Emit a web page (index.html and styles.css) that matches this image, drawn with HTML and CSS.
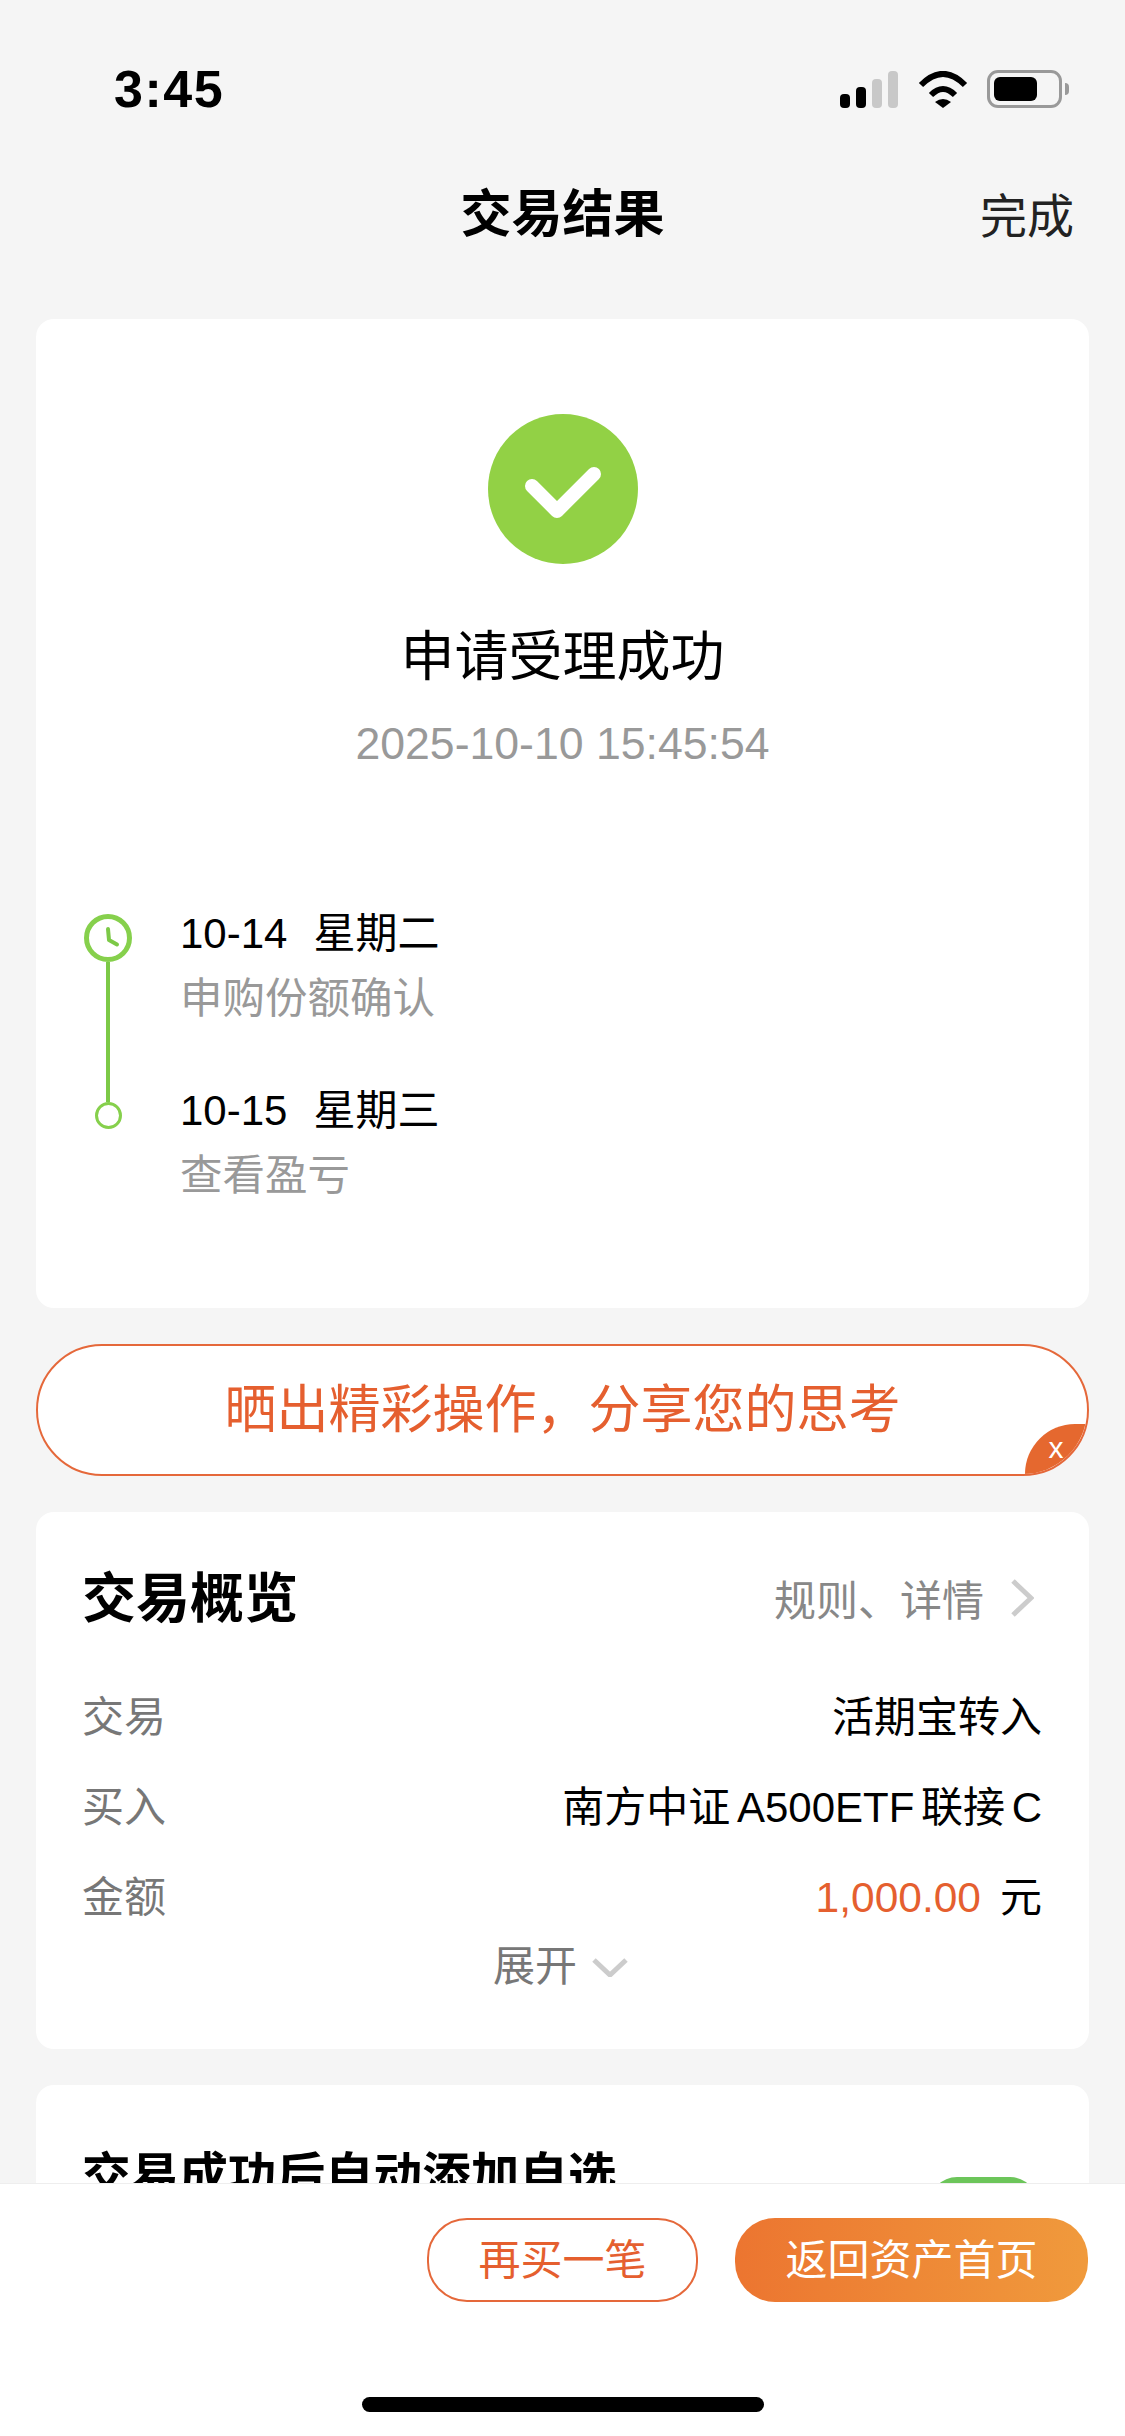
FILE: index.html
```html
<!DOCTYPE html>
<html>
<head>
<meta name="viewport" content="width=device-width, initial-scale=1">
<link rel="stylesheet" href="styles.css">
</head>
<body>

<div class="page">
    <!-- status bar -->
    <div class="status">
        <span class="time">3:45</span>
        <div class="status-icons">
            <div class="signal">
                <i class="bar bar1"></i>
                <i class="bar bar2"></i>
                <i class="bar bar3"></i>
                <i class="bar bar4"></i>
            </div>
            <svg class="wifi" viewBox="0 0 50 37">
                <path d="M3 14Q25 -8 47 14" fill="none" stroke="#000" stroke-width="6"/>
                <path d="M13 24Q25 12 37 24" fill="none" stroke="#000" stroke-width="6"/>
                <path d="M17 31Q25 25 33 31L25 37Z" fill="#000"/>
            </svg>
            <div class="battery"><i class="battery-fill"></i></div>
            <i class="battery-cap"></i>
        </div>
    </div>

    <div class="nav">
        <h1 class="nav-title">交易结果</h1>
        <a class="nav-done">完成</a>
    </div>

    <div class="content">
        <div class="card result">
            <svg class="success-icon" viewBox="0 0 150 150">
                <circle cx="75" cy="75" r="75" fill="#92d145"/>
                <path d="M44 72L69 97L106 60" fill="none" stroke="#fff" stroke-width="14" stroke-linecap="round" stroke-linejoin="round"/>
            </svg>
            <div class="result-title">申请受理成功</div>
            <div class="result-time">2025-10-10 15:45:54</div>

            <div class="timeline">
                <div class="rail">
                    <svg class="clock" viewBox="0 0 48 48">
                        <circle cx="24" cy="24" r="21.500" fill="none" stroke="#86d04c" stroke-width="5"/>
                        <path d="M24 15L25 26L33 30.500" fill="none" stroke="#7cc947" stroke-width="4" stroke-linecap="round" stroke-linejoin="round"/>
                    </svg>
                    <i class="rail-line"></i>
                    <i class="rail-dot"></i>
                </div>
                <div class="steps">
                    <div class="step">
                        <div class="step-date">10-14<span class="weekday">星期二</span></div>
                        <div class="step-text">申购份额确认</div>
                    </div>
                    <div class="step">
                        <div class="step-date">10-15<span class="weekday">星期三</span></div>
                        <div class="step-text">查看盈亏</div>
                    </div>
                </div>
            </div>
        </div>

        <div class="share">
            <span class="share-text">晒出精彩操作，分享您的思考</span>
            <span class="share-close">x</span>
        </div>

        <div class="card overview">
            <div class="overview-head">
                <h2 class="overview-title">交易概览</h2>
                <div class="overview-link">
                    规则、详情
                    <svg class="chevron-right" viewBox="0 0 24 38">
                        <path d="M3 2L21 19L3 36" fill="none" stroke="#ccc" stroke-width="5"/>
                    </svg>
                </div>
            </div>
            <div class="row">
                <span class="row-label">交易</span>
                <span class="row-value">活期宝转入</span>
            </div>
            <div class="row">
                <span class="row-label">买入</span>
                <span class="row-value">南方中证 A500ETF 联接 C</span>
            </div>
            <div class="row">
                <span class="row-label">金额</span>
                <span class="row-value"><span class="amount">1,000.00</span>元</span>
            </div>
            <div class="expand">
                展开
                <svg class="chevron-down" viewBox="0 0 36 20">
                    <path d="M2 3L18 18L34 3" fill="none" stroke="#ccc" stroke-width="5"/>
                </svg>
            </div>
        </div>

        <div class="card watch">
            <div class="watch-title">交易成功后自动添加自选</div>
            <div class="toggle"></div>
        </div>
    </div>

    <div class="footer">
        <div class="footer-btns">
            <a class="btn btn-line">再买一笔</a>
            <a class="btn btn-fill">返回资产首页</a>
        </div>
        <div class="home-bar"></div>
    </div>
</div>

</body>
</html>
```

FILE: styles.css
```css
* {
    box-sizing: border-box;
}

body {
    margin: 0;
    font-family: "Liberation Sans", "Noto Sans CJK SC", sans-serif;
    color: #000;
}

h1, h2 {
    margin: 0;
    font-weight: 700;
}

.page {
    position: relative;
    width: 1125px;
    height: 2436px;
    overflow: hidden;
    background: #f5f5f5;
}

/* Status bar */
.status {
    height: 178px;
    padding: 0 56px 0 114px;
    display: flex;
    align-items: center;
    justify-content: space-between;
}

.time {
    font-size: 52px;
    font-weight: 700;
    letter-spacing: 1.500px;
}

.status-icons {
    display: flex;
    align-items: center;
}

.signal {
    display: flex;
    align-items: flex-end;
    gap: 6px;
    height: 37px;
    margin-right: 20px;
}

.bar {
    display: block;
    width: 10px;
    border-radius: 4px;
    background: #c8c8c8;
}

.bar1 {
    height: 14px;
    background: #000;
}

.bar2 {
    height: 21px;
    background: #000;
}

.bar3 {
    height: 29px;
}

.bar4 {
    height: 37px;
}

.wifi {
    width: 50px;
    height: 37px;
    margin-right: 19px;
}

.battery {
    width: 75px;
    height: 38px;
    padding: 4px;
    border: 3px solid #999;
    border-radius: 11px;
}

.battery-fill {
    display: block;
    width: 43px;
    height: 100%;
    border-radius: 6px;
    background: #000;
}

.battery-cap {
    display: block;
    width: 4px;
    height: 12px;
    margin-left: 3px;
    border-radius: 0 4px 4px 0;
    background: #999;
}

/* Nav */
.nav {
    position: relative;
    height: 74px;
    display: flex;
    align-items: center;
    justify-content: center;
}

.nav-title {
    font-size: 51px;
    line-height: 60px;
}

.nav-done {
    position: absolute;
    right: 51px;
    top: 14px;
    font-size: 47px;
    line-height: 50px;
    color: #222;
}

/* Cards */
.content {
    padding: 67px 36px 0;
    display: flex;
    flex-direction: column;
    gap: 36px;
}

.card {
    background: #fff;
    border-radius: 18px;
}

.result {
    height: 989px;
    padding-top: 95px;
    display: flex;
    flex-direction: column;
}

.success-icon {
    width: 150px;
    height: 150px;
    align-self: center;
}

.result-title {
    margin-top: 63px;
    font-size: 54px;
    line-height: 60px;
    text-align: center;
}

.result-time {
    margin-top: 32px;
    font-size: 44.600px;
    line-height: 50px;
    text-align: center;
    color: #999;
}

/* Timeline */
.timeline {
    margin-top: 140px;
    padding-left: 48px;
    display: flex;
}

.rail {
    width: 48px;
    margin-top: 5px;
    margin-right: 48px;
    display: flex;
    flex-direction: column;
    align-items: center;
}

.clock {
    width: 48px;
    height: 48px;
    flex: none;
}

.rail-line {
    display: block;
    width: 4px;
    height: 140px;
    background: #7cc947;
}

.rail-dot {
    display: block;
    width: 27px;
    height: 27px;
    border: 3px solid #86d04c;
    border-radius: 50%;
}

.step {
    padding-bottom: 62px;
}

.step-date {
    font-size: 42px;
    line-height: 50px;
}

.weekday {
    margin-left: 26px;
}

.step-text {
    margin-top: 15px;
    font-size: 42.500px;
    line-height: 50px;
    color: #999;
}

/* Share banner */
.share {
    position: relative;
    height: 132px;
    padding-bottom: 9px;
    border: 2px solid #e5683a;
    border-radius: 66px;
    background: #fff;
    overflow: hidden;
    display: flex;
    align-items: center;
    justify-content: center;
}

.share-text {
    font-size: 52px;
    color: #e55f2f;
}

.share-close {
    position: absolute;
    right: 0;
    bottom: 0;
    width: 62px;
    height: 50px;
    padding-top: 6px;
    border-radius: 50px 0 0 0;
    background: #e5682f;
    color: #fff;
    font-size: 30px;
    line-height: 36px;
    text-align: center;
}

/* Overview */
.overview {
    height: 537px;
    padding: 57px 47px 0 46px;
}

.overview-head {
    height: 99px;
    display: flex;
    justify-content: space-between;
}

.overview-title {
    font-size: 54px;
    line-height: 60px;
}

.overview-link {
    height: 60px;
    padding-bottom: 3px;
    padding-right: 8px;
    display: flex;
    align-items: center;
    gap: 26px;
    font-size: 42px;
    color: #888;
}

.chevron-right {
    width: 24px;
    height: 38px;
}

.row {
    height: 90px;
    display: flex;
    align-items: center;
    justify-content: space-between;
    font-size: 42px;
}

.row-label {
    color: #777;
}

.row-value {
    word-spacing: -5px;
}

.amount {
    margin-right: 19px;
    font-size: 42.500px;
    color: #e55f2f;
}

.expand {
    height: 48px;
    display: flex;
    align-items: center;
    justify-content: center;
    gap: 15px;
    padding-right: 3px;
    font-size: 42px;
    color: #777;
}

.chevron-down {
    width: 36px;
    height: 20px;
    margin-top: 10px;
}

/* Watchlist card, cut off by the footer */
.watch {
    height: 240px;
    padding: 61px 51px 0 46px;
    display: flex;
    justify-content: space-between;
}

.watch-title {
    font-size: 48.600px;
    font-weight: 700;
    line-height: 60px;
}

.toggle {
    width: 109px;
    height: 56px;
    margin-top: 31px;
    border-radius: 28px;
    background: #6cc55a;
}

/* Footer sits over the scrolling content */
.footer {
    position: absolute;
    left: 0;
    right: 0;
    bottom: 0;
    height: 253px;
    padding-top: 34px;
    border-top: 1px solid #eee;
    background: #fff;
}

.footer-btns {
    display: flex;
    justify-content: flex-end;
    gap: 37px;
    padding-right: 37px;
}

.btn {
    height: 84px;
    padding-bottom: 8px;
    border-radius: 40px;
    display: flex;
    align-items: center;
    justify-content: center;
    font-size: 42px;
}

.btn-line {
    width: 271px;
    border: 2px solid #e5683a;
    color: #e55f2f;
}

.btn-fill {
    width: 353px;
    background: linear-gradient(90deg, #ec7530, #f09a3c);
    color: #fff;
}

.home-bar {
    width: 402px;
    height: 15px;
    margin: 95px 0 0 362px;
    border-radius: 8px;
    background: #000;
}
```
